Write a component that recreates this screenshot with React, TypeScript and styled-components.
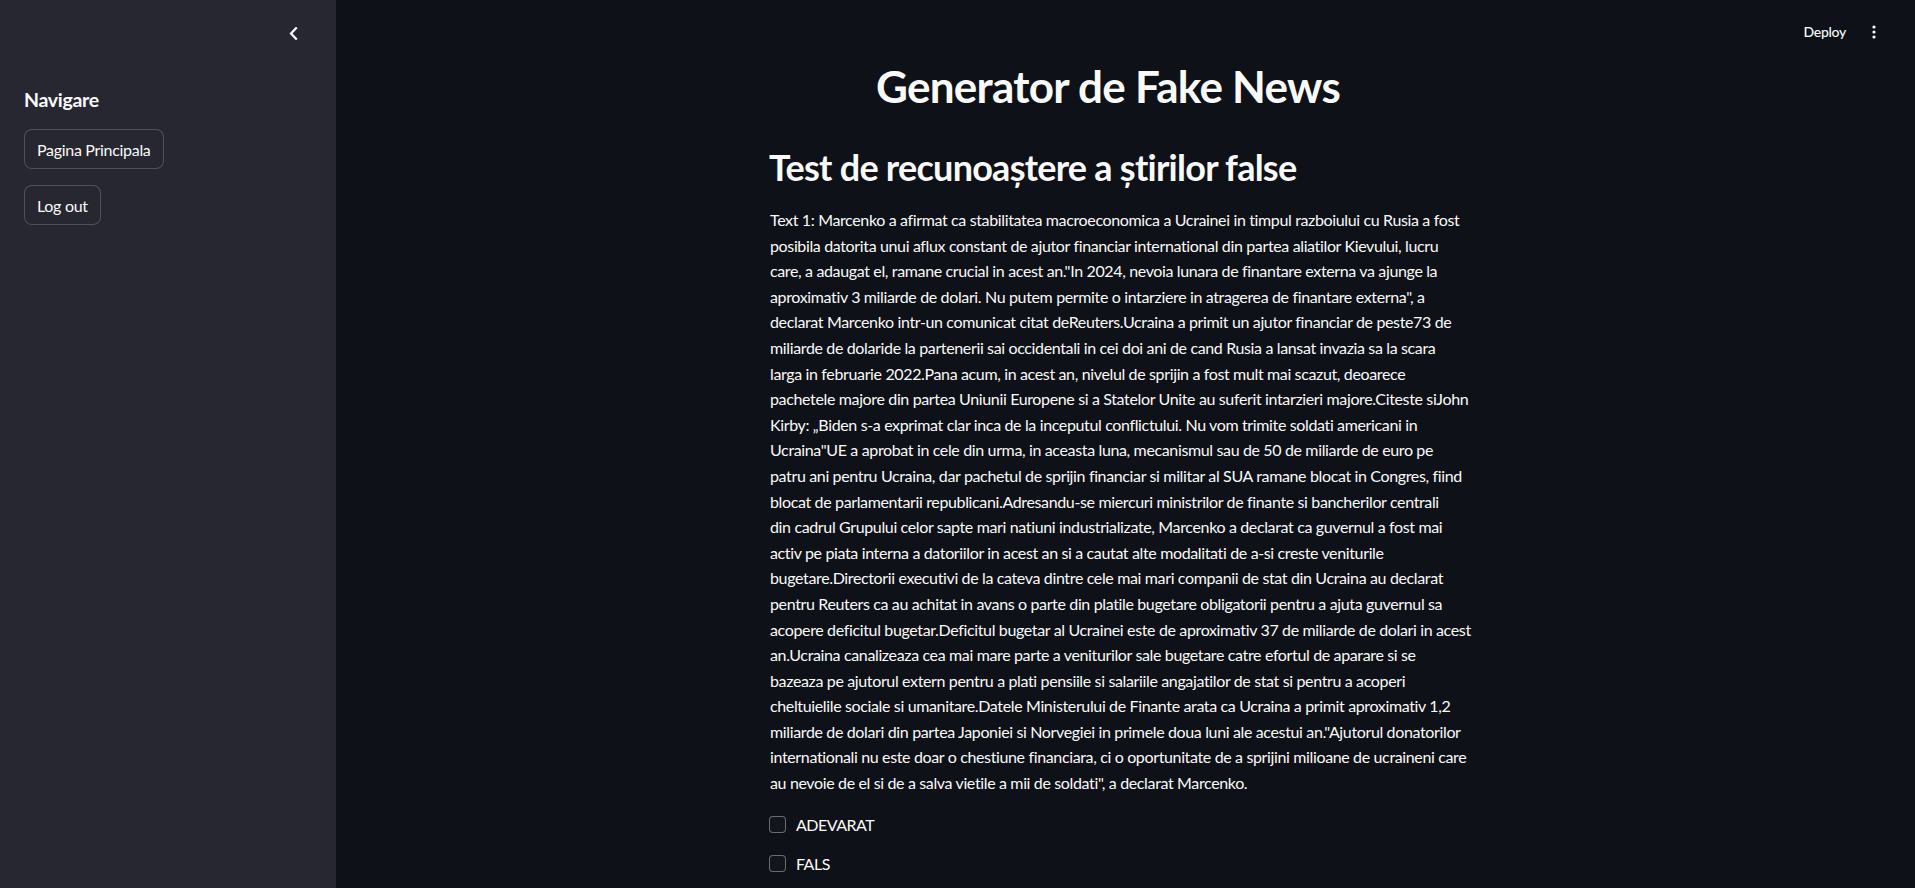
import React from "react";
import styled, { createGlobalStyle } from "styled-components";

const GlobalStyle = createGlobalStyle`
  html, body { margin: 0; padding: 0; height: 100%; }
  body {
    background: #0e1117;
    color: rgb(250, 250, 250);
    font-family: "Lato", "Noto Sans", sans-serif;
    overflow: hidden;
  }
  #root { height: 100%; }
`;

const Shell = styled.div`
  display: flex;
  height: 888px;
  width: 100%;
`;

const Sidebar = styled.aside`
  width: 336px;
  flex: 0 0 336px;
  background: #262730;
  display: flex;
  flex-direction: column;
`;

const SidebarHeader = styled.div`
  display: flex;
  justify-content: flex-end;
  padding: 27px 38px 0 0;
  height: 61px;
  box-sizing: border-box;
`;

const IconButton = styled.button`
  background: none;
  border: none;
  padding: 0;
  margin: 0;
  display: flex;
  cursor: pointer;
  color: rgb(250, 250, 250);
`;

const SidebarBody = styled.div`
  display: flex;
  flex-direction: column;
  align-items: flex-start;
  padding: 27px 24px 0;
  gap: 16px;
`;

const SideTitle = styled.h3`
  margin: 0 0 1px;
  font-size: 19.5px;
  font-weight: 700;
  line-height: 24px;
  letter-spacing: -0.3px;
`;

const NavButton = styled.button`
  height: 40px;
  padding: 0 12px;
  border: 1px solid rgba(250, 250, 250, 0.2);
  border-radius: 8px;
  background: #262730;
  color: rgb(250, 250, 250);
  font-family: "Lato", "Noto Sans", sans-serif;
  font-size: 16px;
  letter-spacing: -0.3px;
  cursor: pointer;
`;

const Main = styled.main`
  flex: 1;
  display: flex;
  flex-direction: column;
  padding-right: 7px;
  min-width: 0;
`;

const Toolbar = styled.header`
  height: 60px;
  display: flex;
  justify-content: flex-end;
  align-items: center;
  gap: 26px;
  padding: 3px 32px 0 0;
  box-sizing: border-box;
`;

const DeployButton = styled.button`
  background: none;
  border: none;
  color: rgb(250, 250, 250);
  font-family: "Lato", "Noto Sans", sans-serif;
  font-size: 14px;
  font-weight: 500;
  letter-spacing: -0.3px;
  padding: 0;
  cursor: pointer;
`;

const Block = styled.div`
  width: 704px;
  margin: 0 auto;
  display: flex;
  flex-direction: column;
`;

const Title = styled.h1`
  margin: 0;
  padding-right: 28px;
  text-align: center;
  font-size: 44px;
  font-weight: 700;
  line-height: 53px;
  letter-spacing: -0.73px;
`;

const Subtitle = styled.h2`
  margin: 33px 0 0;
  margin-left: -1px;
  font-size: 36px;
  font-weight: 700;
  line-height: 43px;
  letter-spacing: -0.75px;
`;

const Paragraph = styled.p`
  margin: 18px 0 0;
  font-size: 16px;
  line-height: 25.6px;
  letter-spacing: -0.36px;
  white-space: nowrap;
`;

const Options = styled.div`
  display: flex;
  flex-direction: column;
  gap: 15px;
  margin-top: 17px;
`;

const CheckRow = styled.label`
  display: flex;
  align-items: center;
  gap: 10px;
  height: 24px;
  font-size: 16px;
  letter-spacing: -0.5px;
  cursor: pointer;
`;

const Box = styled.span`
  width: 17px;
  height: 17px;
  margin-left: -1px;
  box-sizing: border-box;
  border: 1px solid rgba(250, 250, 250, 0.38);
  border-radius: 4px;
  background: #12151c;
`;

const lines = [
  "Text 1: Marcenko a afirmat ca stabilitatea macroeconomica a Ucrainei in timpul razboiului cu Rusia a fost",
  "posibila datorita unui aflux constant de ajutor financiar international din partea aliatilor Kievului, lucru",
  "care, a adaugat el, ramane crucial in acest an.\"In 2024, nevoia lunara de finantare externa va ajunge la",
  "aproximativ 3 miliarde de dolari. Nu putem permite o intarziere in atragerea de finantare externa\", a",
  "declarat Marcenko intr-un comunicat citat deReuters.Ucraina a primit un ajutor financiar de peste73 de",
  "miliarde de dolaride la partenerii sai occidentali in cei doi ani de cand Rusia a lansat invazia sa la scara",
  "larga in februarie 2022.Pana acum, in acest an, nivelul de sprijin a fost mult mai scazut, deoarece",
  "pachetele majore din partea Uniunii Europene si a Statelor Unite au suferit intarzieri majore.Citeste siJohn",
  "Kirby: „Biden s-a exprimat clar inca de la inceputul conflictului. Nu vom trimite soldati americani in",
  "Ucraina\"UE a aprobat in cele din urma, in aceasta luna, mecanismul sau de 50 de miliarde de euro pe",
  "patru ani pentru Ucraina, dar pachetul de sprijin financiar si militar al SUA ramane blocat in Congres, fiind",
  "blocat de parlamentarii republicani.Adresandu-se miercuri ministrilor de finante si bancherilor centrali",
  "din cadrul Grupului celor sapte mari natiuni industrializate, Marcenko a declarat ca guvernul a fost mai",
  "activ pe piata interna a datoriilor in acest an si a cautat alte modalitati de a-si creste veniturile",
  "bugetare.Directorii executivi de la cateva dintre cele mai mari companii de stat din Ucraina au declarat",
  "pentru Reuters ca au achitat in avans o parte din platile bugetare obligatorii pentru a ajuta guvernul sa",
  "acopere deficitul bugetar.Deficitul bugetar al Ucrainei este de aproximativ 37 de miliarde de dolari in acest",
  "an.Ucraina canalizeaza cea mai mare parte a veniturilor sale bugetare catre efortul de aparare si se",
  "bazeaza pe ajutorul extern pentru a plati pensiile si salariile angajatilor de stat si pentru a acoperi",
  "cheltuielile sociale si umanitare.Datele Ministerului de Finante arata ca Ucraina a primit aproximativ 1,2",
  "miliarde de dolari din partea Japoniei si Norvegiei in primele doua luni ale acestui an.\"Ajutorul donatorilor",
  "internationali nu este doar o chestiune financiara, ci o oportunitate de a sprijini milioane de ucraineni care",
  "au nevoie de el si de a salva vietile a mii de soldati\", a declarat Marcenko.",
];

function ChevronLeft() {
  return (
    <svg width="9" height="13" viewBox="0 0 9 13" fill="none">
      <polyline points="7,1.2 2,6.5 7,11.8" stroke="currentColor" strokeWidth="2.2" strokeLinecap="square" strokeLinejoin="miter" />
    </svg>
  );
}

function Kebab() {
  return (
    <svg width="4" height="14" viewBox="0 0 4 14" fill="rgb(250,250,250)">
      <circle cx="2" cy="2" r="1.6" />
      <circle cx="2" cy="7" r="1.6" />
      <circle cx="2" cy="12" r="1.6" />
    </svg>
  );
}

export default function App() {
  return (
    <>
      <GlobalStyle />
      <Shell>
        <Sidebar>
          <SidebarHeader>
            <IconButton aria-label="Collapse sidebar">
              <ChevronLeft />
            </IconButton>
          </SidebarHeader>
          <SidebarBody>
            <SideTitle>Navigare</SideTitle>
            <NavButton>Pagina Principala</NavButton>
            <NavButton>Log out</NavButton>
          </SidebarBody>
        </Sidebar>
        <Main>
          <Toolbar>
            <DeployButton>Deploy</DeployButton>
            <IconButton aria-label="Menu">
              <Kebab />
            </IconButton>
          </Toolbar>
          <Block>
            <Title>Generator de Fake News</Title>
            <Subtitle>Test de recunoaștere a știrilor false</Subtitle>
            <Paragraph>
              {lines.map((l, i) => (
                <React.Fragment key={i}>
                  {l}
                  {i < lines.length - 1 && <br />}
                </React.Fragment>
              ))}
            </Paragraph>
            <Options>
              <CheckRow>
                <Box />
                ADEVARAT
              </CheckRow>
              <CheckRow>
                <Box />
                FALS
              </CheckRow>
            </Options>
          </Block>
        </Main>
      </Shell>
    </>
  );
}
